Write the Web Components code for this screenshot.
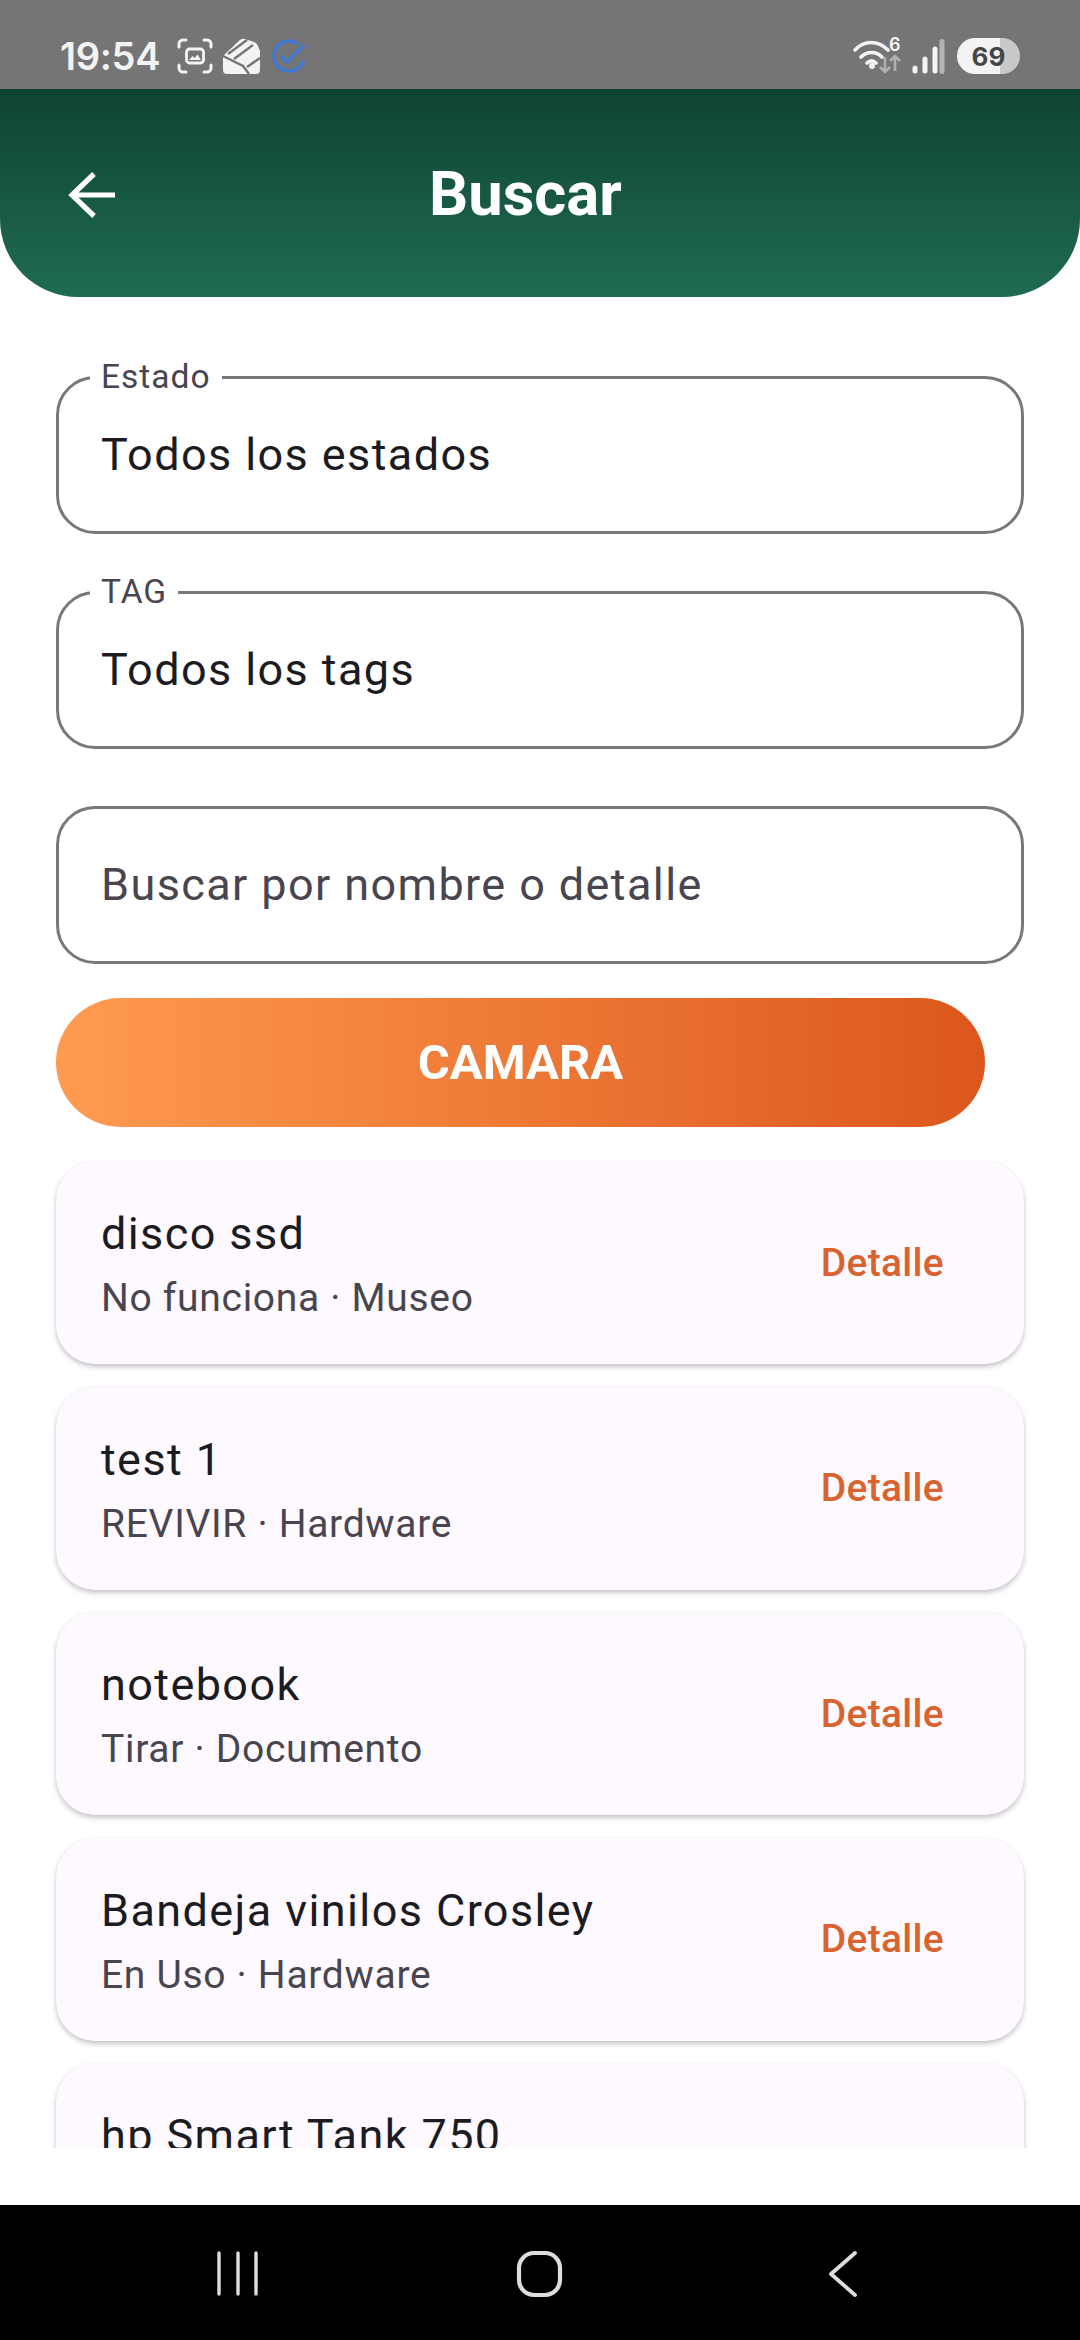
<!doctype html>
<html lang="es">
<head>
<meta charset="utf-8">
<title>Buscar</title>
<style>
    html, body { margin: 0; background: #fff; }
    body { font-family: Roboto, "Noto Sans", sans-serif; }
</style>
</head>
<body>
<app-screen>
    <status-bar slot="status" time="19:54" battery="69"></status-bar>
    <app-bar slot="bar">Buscar</app-bar>

    <outlined-field label="Estado">Todos los estados</outlined-field>
    <outlined-field label="TAG">Todos los tags</outlined-field>
    <outlined-field hint>Buscar por nombre o detalle</outlined-field>
    <gradient-button>CAMARA</gradient-button>

    <result-card slot="list" action="Detalle"><span slot="title">disco ssd</span>No funciona · Museo</result-card>
    <result-card slot="list" action="Detalle"><span slot="title">test 1</span>REVIVIR · Hardware</result-card>
    <result-card slot="list" action="Detalle"><span slot="title">notebook</span>Tirar · Documento</result-card>
    <result-card slot="list" action="Detalle"><span slot="title">Bandeja vinilos Crosley</span>En Uso · Hardware</result-card>
    <result-card slot="list"><span slot="title">hp Smart Tank 750</span>&nbsp;</result-card>

    <nav-bar slot="nav"></nav-bar>
</app-screen>

<script>
// small helper: every element below has the same shadow setup
class ShadowElement extends HTMLElement {
    constructor( html ) {
        super()
        const template = document.createElement('template')
        template.innerHTML = html
        this.attachShadow({ mode: 'open' })
        this.shadowRoot.appendChild( template.content.cloneNode(true) )
    }
}

class AppScreen extends ShadowElement {
    constructor() {
        super(`
            <style>
                :host { display: flex; flex-direction: column; width: 1080px; height: 2340px; overflow: hidden; background: #fff; }
                .form { display: flex; flex-direction: column; padding: 79px 56px 0; }
                .list { flex: 1; min-height: 0; overflow: hidden; display: flex; flex-direction: column; gap: 22.500px; padding: 34px 56px 0; margin-bottom: 57px; }
            </style>
            <slot name="status"></slot>
            <slot name="bar"></slot>
            <div class="form"><slot></slot></div>
            <div class="list"><slot name="list"></slot></div>
            <slot name="nav"></slot>
        `)
    }
}

class StatusBar extends ShadowElement {
    constructor() {
        super(`
            <style>
                :host { display: flex; align-items: center; height: 89px; flex: none; background: #757575; color: #f3f3f3; padding: 23px 60px 0; box-sizing: border-box; }
                .time { font: 600 38px Inter, Roboto, sans-serif; letter-spacing: -.3px; width: 117px; }
                svg { display: block; flex: none; }
                .shot { width: 36px; height: 36px; }
                .mail { width: 37px; height: 37px; margin-left: 10px; }
                .check { width: 34px; height: 34px; margin-left: 12px; }
                .right { margin-left: auto; display: flex; align-items: center; }
                .wifi { position: relative; width: 48px; height: 36px; }
                .wifi span { position: absolute; left: 36px; top: -2px; font: 600 18px/18px Inter, Roboto, sans-serif; }
                .signal { width: 33px; height: 35px; margin-left: 11px; }
                .battery { width: 63px; height: 36px; margin-left: 12px; border-radius: 18px; overflow: hidden; background: linear-gradient(90deg, #f3f3f3 68%, #c9c9c9 68%); color: #454545; font: 700 26px Inter, Roboto, sans-serif; display: flex; align-items: center; justify-content: center; }
            </style>
            <span class="time"></span>
            <svg class="shot" viewBox="0 0 36 36" fill="none" stroke="#f3f3f3" stroke-width="3" stroke-linecap="round">
                <path d="M2 9V6a4 4 0 0 1 4-4h3M27 2h3a4 4 0 0 1 4 4v3M34 27v3a4 4 0 0 1-4 4h-3M9 34H6a4 4 0 0 1-4-4v-3"/>
                <rect x="9.500" y="11" width="17" height="14" rx="3" stroke-width="2.800"/>
                <path d="M12 22l3.500-4 2 2 3-3.500 3.500 5.500z" fill="#f3f3f3" stroke="none"/>
            </svg>
            <svg class="mail" viewBox="0 0 37 37">
                <path d="M0 20Q0 18 2 16L17 2Q19 0 22 1L31 4Q34 5 35 8L37 13V32Q37 36 33 36H4Q0 36 0 32z" fill="#f3f3f3"/>
                <path d="M5 16 24 2M11 21 30 7M0 18 20 28 26 36M24 29 37 20" fill="none" stroke="#757575" stroke-width="2.400"/>
            </svg>
            <svg class="check" viewBox="0 0 34 34" fill="none" stroke="#4078d8" stroke-width="3.400">
                <path d="M26 5A15 15 0 1 0 31.500 21"/>
                <path d="M9 17l6 6L32 6" stroke-width="3.200"/>
            </svg>
            <div class="right">
                <div class="wifi">
                    <svg viewBox="0 0 48 36" fill="none">
                        <path d="M2 12C11 2 25 2 35 12M8 19c6-6 15-6 21 0M14 25c3-3 6-3 9 0" stroke="#f3f3f3" stroke-width="3.600" stroke-linecap="round"/>
                        <circle cx="19" cy="28" r="3" fill="#f3f3f3"/>
                        <path d="M32 19v15m-5-5 5 5 5-5" stroke="#b0b0b0" stroke-width="2.600"/>
                        <path d="M42 33V18m-5 5 5-5 5 5" stroke="#b0b0b0" stroke-width="2.600"/>
                    </svg>
                    <span>6</span>
                </div>
                <svg class="signal" viewBox="0 0 33 35" fill="none" stroke-width="5" stroke-linecap="round">
                    <path d="M3 32v-3M13 32V20M23 32V10" stroke="#f3f3f3"/>
                    <path d="M30 32.500V2.500" stroke="#b4b4b4"/>
                </svg>
                <div class="battery"></div>
            </div>
        `)
    }

    connectedCallback() {
        this.shadowRoot.querySelector('.time').textContent = this.getAttribute('time')
        this.shadowRoot.querySelector('.battery').textContent = this.getAttribute('battery')
    }
}

class AppBar extends ShadowElement {
    constructor() {
        super(`
            <style>
                :host { display: flex; align-items: center; flex: none; height: 208px; padding: 4px 0 0 68px; box-sizing: border-box; color: #fff; background: linear-gradient(180deg, #0f4331, #1f6c50); border-radius: 0 0 78px 78px; }
                svg { width: 48px; height: 48px; flex: none; }
                h1 { margin: -3px 0 0 313px; font: 700 61.500px Roboto, sans-serif; }
            </style>
            <svg viewBox="0 0 48 48" fill="none" stroke="#fff" stroke-width="5.200">
                <path d="M47 24H4M26 3 4 24l22 21"/>
            </svg>
            <h1><slot></slot></h1>
        `)
    }
}

class OutlinedField extends ShadowElement {
    constructor() {
        super(`
            <style>
                :host { display: flex; align-items: center; position: relative; height: 158px; margin-bottom: 57px; box-sizing: border-box; border: 3px solid #79767c; border-radius: 39px; padding: 0 42px 2px; font: 400 45px Roboto, sans-serif; letter-spacing: 1.4px; color: #1c1b1f; }
                :host([hint]) { color: #49454f; }
                :host(:last-of-type) { margin-bottom: 34px; }
                .label { position: absolute; left: 31px; top: -22px; padding: 0 11px; background: #fff; font-size: 33.500px; letter-spacing: 1px; line-height: 39px; color: #49454f; }
                .label:empty { display: none; }
            </style>
            <span class="label"></span>
            <slot></slot>
        `)
    }

    connectedCallback() {
        this.shadowRoot.querySelector('.label').textContent = this.getAttribute('label') || ''
    }
}

class GradientButton extends ShadowElement {
    constructor() {
        super(`
            <style>
                :host { display: flex; align-items: center; justify-content: center; width: 929px; height: 129px; border-radius: 64.500px; background: linear-gradient(90deg, #ff9b50, #dc571d); color: #fff; font: 700 49px Roboto, sans-serif; }
            </style>
            <slot></slot>
        `)
    }
}

class ResultCard extends ShadowElement {
    constructor() {
        super(`
            <style>
                :host { display: flex; flex: none; align-items: center; height: 203px; box-sizing: border-box; padding: 0 80px 0 45px; background: #fdf9ff; border-radius: 39px; box-shadow: 0 3px 5px rgba(60, 50, 70, .28), 0 0 2px rgba(60, 50, 70, .06); }
                .text { flex: 1; font: 400 39px Roboto, sans-serif; letter-spacing: .7px; color: #49454f; }
                .title { display: block; font-size: 45px; letter-spacing: 1.4px; color: #1c1b1f; line-height: 60px; margin-bottom: 11px; }
                .action { font: 500 39px Roboto, sans-serif; color: #d8632f; letter-spacing: .3px; }
            </style>
            <div class="text">
                <span class="title"><slot name="title"></slot></span>
                <slot></slot>
            </div>
            <span class="action"></span>
        `)
    }

    connectedCallback() {
        this.shadowRoot.querySelector('.action').textContent = this.getAttribute('action') || ''
    }
}

class NavBar extends ShadowElement {
    constructor() {
        super(`
            <style>
                :host { display: grid; grid-template-columns: repeat(3, 302px); justify-content: center; align-items: center; flex: none; height: 135px; background: #000; padding-top: 3px; box-sizing: border-box; }
                svg { justify-self: center; width: 50px; height: 48px; display: block; }
            </style>
            <svg viewBox="0 0 50 48" fill="none" stroke="#ddd" stroke-width="3.400" stroke-linecap="round">
                <path d="M6 3v41M25 3v41M43 3v41"/>
            </svg>
            <svg viewBox="0 0 50 48" fill="none" stroke="#ddd" stroke-width="4.200">
                <rect x="4" y="3" width="41" height="42" rx="15"/>
            </svg>
            <svg viewBox="0 0 50 48" fill="none" stroke="#ddd" stroke-width="3.800" stroke-linecap="round" stroke-linejoin="round">
                <path d="M38 3 14 24l24 21"/>
            </svg>
        `)
    }
}

customElements.define('app-screen', AppScreen)
customElements.define('status-bar', StatusBar)
customElements.define('app-bar', AppBar)
customElements.define('outlined-field', OutlinedField)
customElements.define('gradient-button', GradientButton)
customElements.define('result-card', ResultCard)
customElements.define('nav-bar', NavBar)
</script>
</body>
</html>
